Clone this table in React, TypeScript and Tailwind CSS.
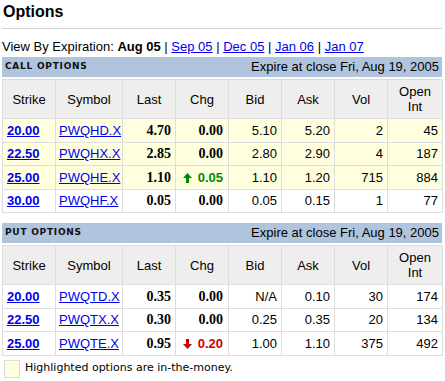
const sans = { fontFamily: '"Liberation Sans", Arial, sans-serif' }

type Row = {
  strike: string
  symbol: string
  last: string
  chg: string
  dir?: 'up' | 'down'
  bid: string
  ask: string
  vol: string
  oi: string
  itm?: boolean
}

const calls: Row[] = [
  { strike: '20.00', symbol: 'PWQHD.X', last: '4.70', chg: '0.00', bid: '5.10', ask: '5.20', vol: '2', oi: '45', itm: true },
  { strike: '22.50', symbol: 'PWQHX.X', last: '2.85', chg: '0.00', bid: '2.80', ask: '2.90', vol: '4', oi: '187', itm: true },
  { strike: '25.00', symbol: 'PWQHE.X', last: '1.10', chg: '0.05', dir: 'up', bid: '1.10', ask: '1.20', vol: '715', oi: '884', itm: true },
  { strike: '30.00', symbol: 'PWQHF.X', last: '0.05', chg: '0.00', bid: '0.05', ask: '0.15', vol: '1', oi: '77' },
]

const puts: Row[] = [
  { strike: '20.00', symbol: 'PWQTD.X', last: '0.35', chg: '0.00', bid: 'N/A', ask: '0.10', vol: '30', oi: '174' },
  { strike: '22.50', symbol: 'PWQTX.X', last: '0.30', chg: '0.00', bid: '0.25', ask: '0.35', vol: '20', oi: '134' },
  { strike: '25.00', symbol: 'PWQTE.X', last: '0.95', chg: '0.20', dir: 'down', bid: '1.00', ask: '1.10', vol: '375', oi: '492' },
]

function Arrow({ dir }: { dir: 'up' | 'down' }) {
  return (
    <svg width="9" height="10" viewBox="0 0 9 10" className={`inline-block mr-[6px] align-[-1px] ${dir === 'down' ? 'rotate-180' : ''}`}>
      <path d="M4.5 0 L9 5 L6 5 L6 10 L3 10 L3 5 L0 5 Z" fill={dir === 'up' ? '#008800' : '#cc0000'} />
    </svg>
  )
}

function Band({ title }: { title: string }) {
  return (
    <div className="h-[20px] bg-[#b0c4de] flex items-center justify-between pl-[3px] pr-[3px]">
      <span className="text-[9px] font-bold tracking-[0.75px] text-[#111]" style={{ fontFamily: '"DejaVu Sans", Verdana, sans-serif' }}>
        {title}
      </span>
      <span className="text-[13px] text-black" style={sans}>Expire at close Fri, Aug 19, 2005</span>
    </div>
  )
}

function OptionTable({ rows }: { rows: Row[] }) {
  const th = 'border border-[#dddddd] bg-[#eeeeee] font-normal text-center leading-[15px] px-[2px]'
  const td = 'border border-[#dddddd] px-[4px] leading-[15px]'
  return (
    <table className="mt-[2px] w-[440px] table-fixed border-collapse text-[13px]" style={sans}>
      <colgroup>
        <col className="w-[53px]" />
        <col className="w-[67px]" />
        <col className="w-[53px]" />
        <col className="w-[53px]" />
        <col className="w-[53px]" />
        <col className="w-[53px]" />
        <col className="w-[53px]" />
        <col className="w-[55px]" />
      </colgroup>
      <thead>
        <tr className="h-[39px]">
          <th className={th}>Strike</th>
          <th className={th}>Symbol</th>
          <th className={th}>Last</th>
          <th className={th}>Chg</th>
          <th className={th}>Bid</th>
          <th className={th}>Ask</th>
          <th className={th}>Vol</th>
          <th className={th}>Open<br />Int</th>
        </tr>
      </thead>
      <tbody>
        {rows.map((r) => (
          <tr key={r.symbol} className={`h-[23.5px] ${r.itm ? 'bg-[#ffffe0]' : 'bg-white'}`}>
            <td className={`${td} font-bold text-[#0000ee] underline`}>{r.strike}</td>
            <td className={`${td} pl-[3px] text-[#0000ee] underline`}>{r.symbol}</td>
            <td className={`${td} text-right font-bold text-[14px]`} style={{ fontFamily: '"Liberation Serif", "Times New Roman", serif' }}>
              {r.last}
            </td>
            {r.dir ? (
              <td className={`${td} pr-[5px] text-right font-bold ${r.dir === 'up' ? 'text-[#008800]' : 'text-[#cc0000]'}`}>
                <Arrow dir={r.dir} />
                {r.chg}
              </td>
            ) : (
              <td className={`${td} pr-[5px] text-right font-bold text-[14px]`} style={{ fontFamily: '"Liberation Serif", "Times New Roman", serif' }}>
                {r.chg}
              </td>
            )}
            <td className={`${td} text-right`}>{r.bid}</td>
            <td className={`${td} text-right`}>{r.ask}</td>
            <td className={`${td} text-right`}>{r.vol}</td>
            <td className={`${td} text-right`}>{r.oi}</td>
          </tr>
        ))}
      </tbody>
    </table>
  )
}

export default function App() {
  return (
    <div className="w-[445px] h-[381px] bg-white text-black pl-[2px] overflow-hidden" style={sans}>
      <div className="pt-[2px] text-[16px] font-bold leading-[20px] pl-[1px]">Options</div>
      <div className="mt-[6px] w-[440px] border-t border-[#d4d4d4]" />

      <div className="mt-[10px] text-[13px] leading-[15px]">
        View By Expiration: <b>Aug 05</b> |{' '}
        <a className="text-[#0000ee] underline">Sep 05</a> |{' '}
        <a className="text-[#0000ee] underline">Dec 05</a> |{' '}
        <a className="text-[#0000ee] underline">Jan 06</a> |{' '}
        <a className="text-[#0000ee] underline">Jan 07</a>
      </div>

      <div className="mt-[3px] w-[440px]">
        <Band title="CALL OPTIONS" />
        <OptionTable rows={calls} />
      </div>

      <div className="mt-[10px] w-[440px]">
        <Band title="PUT OPTIONS" />
        <OptionTable rows={puts} />
      </div>

      <div className="mt-[4px] flex items-center pl-[2px]">
        <div className="w-[16px] h-[18px] bg-[#ffffe0] border border-[#dddddd]" />
        <span className="ml-[5px] text-[11px]" style={{ fontFamily: '"DejaVu Sans", Verdana, sans-serif' }}>
          Highlighted options are in-the-money.
        </span>
      </div>
    </div>
  )
}
